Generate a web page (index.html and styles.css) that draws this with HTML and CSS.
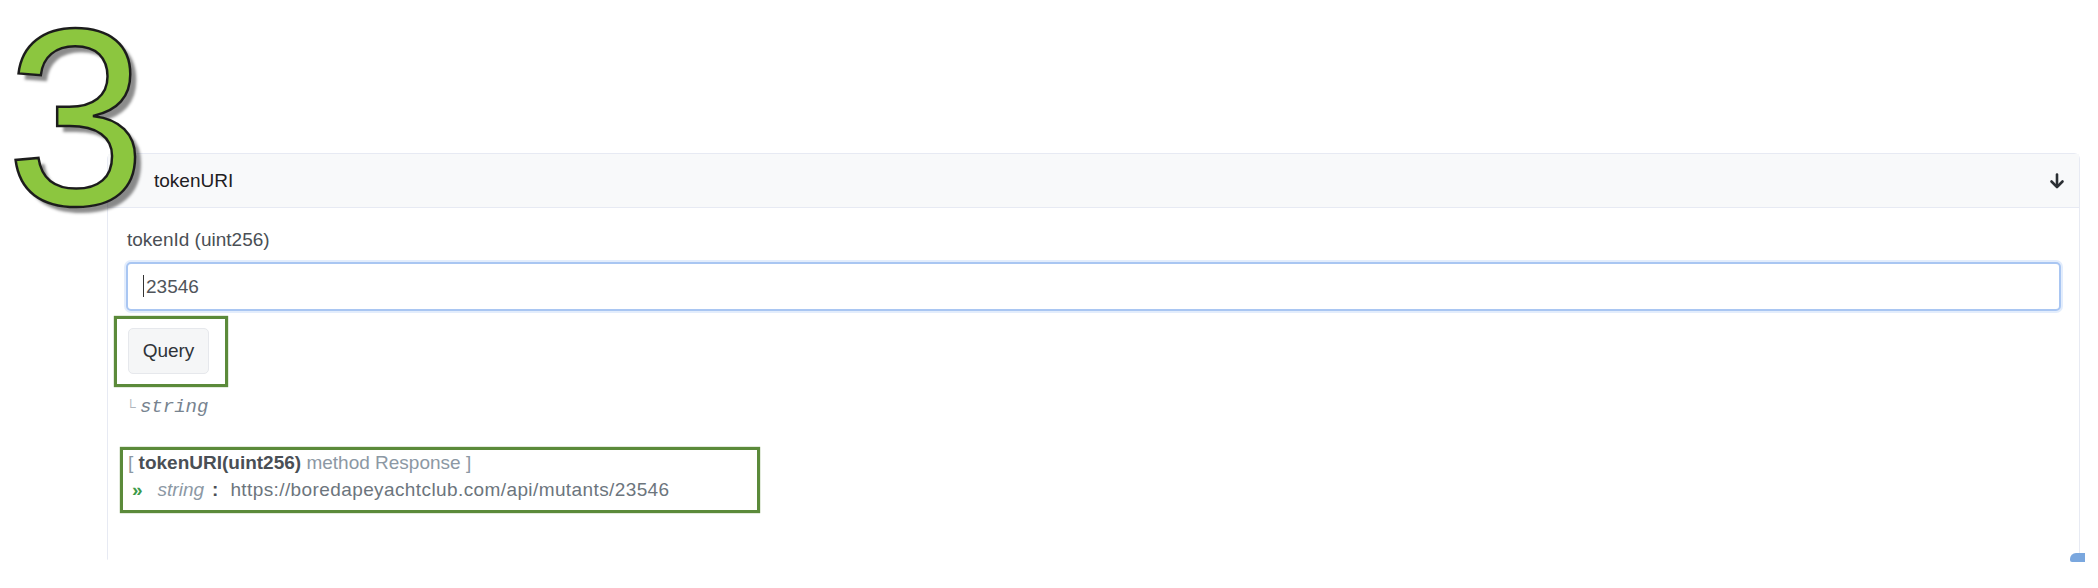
FILE: index.html
```html
<html>
<head>
<meta charset="utf-8">
<title>tokenURI</title>
<link rel="stylesheet" href="styles.css">
</head>
<body>
<div class="step">3</div>
<div class="card">
    <div class="card-header">
        <span class="method-name">tokenURI</span>
        <svg class="toggle" width="16" height="16" viewBox="0 0 16 16">
            <path d="M8 1.5v10" stroke="#2b2f33" stroke-width="2.6" stroke-linecap="round"/>
            <path d="M2.5 8.5L8 14l5.5-5.5" fill="none" stroke="#2b2f33" stroke-width="2.6" stroke-linecap="round" stroke-linejoin="round"/>
        </svg>
    </div>
    <div class="card-body">
        <label class="field-label" for="tokenId">tokenId (uint256)</label>
        <div class="input-wrap">
            <input class="field" id="tokenId" type="text" value="23546">
            <span class="caret"></span>
        </div>
        <div class="mark query-mark">
            <button class="btn">Query</button>
        </div>
        <div class="returns"><span class="tree">&#9492;</span><i>string</i></div>
        <div class="mark response">
            <div class="resp-line">[ <b>tokenURI(uint256)</b> method Response ]</div>
            <div class="resp-line"><span class="chev">&raquo;</span><i class="type">string</i><b class="colon">:</b><span class="value">https://boredapeyachtclub.com/api/mutants/23546</span></div>
        </div>
    </div>
    <div class="corner"></div>
</div>
</body>
</html>
```

FILE: styles.css
```css
body {
    margin: 0;
    background: white;
    font-family: "Liberation Sans", Arial, sans-serif;
    font-size: 19px;
    color: #4a4f55;
}

.step {
    position: absolute;
    left: 6px;
    top: 0;
    font-family: "Liberation Sans", Arial, sans-serif;
    font-size: 252px;
    line-height: 0.934;
    color: #8cc63f;
    -webkit-text-stroke: 2.5px #1c1c1c;
    text-shadow: 6px 6px 3px rgba(0, 0, 0, 0.45);
    z-index: 2;
}

.card {
    position: relative;
    margin: 153px 0 0 107px;
    width: 1971px;
    border: 1px solid #e7eaf3;
    border-bottom-color: transparent;
    border-radius: 6px 6px 0 0;
}

.card-header {
    display: flex;
    align-items: center;
    justify-content: space-between;
    height: 53px;
    padding: 0 14px 0 46px;
    background: #f8f9fa;
    border-bottom: 1px solid #e7eaf3;
    color: #1e2022;
}

.card-body {
    display: flex;
    flex-direction: column;
    align-items: flex-start;
    padding: 20px 18px 46px 18px;
}

.field-label {
    line-height: 24px;
    margin-bottom: 10px;
    padding-left: 1px;
}

.input-wrap {
    position: relative;
    align-self: stretch;
}

.field {
    display: block;
    width: 100%;
    height: 49px;
    box-sizing: border-box;
    padding: 0 18px;
    font-family: inherit;
    font-size: 19px;
    color: #50555b;
    border: 2px solid #a9c6f2;
    border-radius: 5px;
    box-shadow: 0 0 0 2px #e3edfc;
    outline: none;
}

.caret {
    position: absolute;
    left: 17px;
    top: 13px;
    width: 1px;
    height: 22px;
    background: #333;
}

.mark {
    border: 3px solid #5b8a3a;
    box-shadow: 0 0 1px #5b8a3a;
}

.query-mark {
    margin: 5px 0 0 -12px;
    padding: 9px 16px 10px 11px;
}

.btn {
    width: 81px;
    height: 46px;
    font-family: inherit;
    font-size: 19px;
    color: #2f3338;
    background: #f5f6f7;
    border: 1px solid #e6e8ec;
    border-radius: 5px;
}

.returns {
    margin-top: 8px;
    line-height: 24px;
    color: #77838f;
}

.returns .tree {
    font-size: 14px;
    color: #b0b6bd;
    margin-right: 4px;
}

.returns i {
    font-family: "Liberation Mono", monospace;
}

.response {
    margin: 28px 0 0 -6px;
    width: 629px;
    padding: 2px 0 9px 5px;
    color: #8c98a4;
}

.resp-line {
    line-height: 22px;
    white-space: nowrap;
}

.resp-line + .resp-line {
    margin-top: 5px;
}

.resp-line b {
    color: #4a4f55;
}

.chev {
    color: #3c9a4a;
    font-weight: bold;
    margin: 0 15px 0 4px;
}

.type {
    color: #8c98a4;
}

.colon {
    margin: 0 12px 0 8px;
}

.value {
    color: #6c757d;
    letter-spacing: 0.4px;
}

.corner {
    position: absolute;
    right: -6px;
    bottom: -3px;
    width: 15px;
    height: 9px;
    background: #7aa7de;
    border-radius: 6px 0 0 2px;
}
```
